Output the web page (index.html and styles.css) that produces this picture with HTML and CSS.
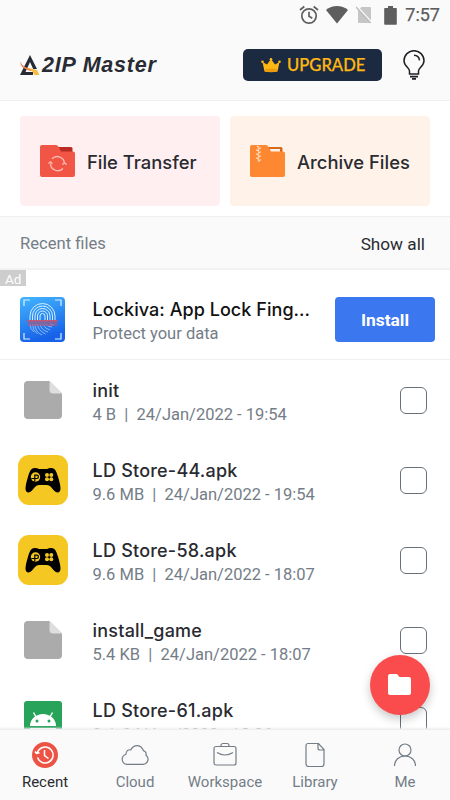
FILE: index.html
```html
<!DOCTYPE html>
<html lang="en">
<head>
<meta charset="utf-8">
<title>AZIP Master</title>
<link rel="stylesheet" href="styles.css">
</head>
<body>
<svg class="defs" width="0" height="0" aria-hidden="true">
  <symbol id="file" viewBox="0 0 38 38">
    <path fill="#ababab" d="M4 0H25.500L38 12.500V34a4 4 0 0 1-4 4H4a4 4 0 0 1-4-4V4a4 4 0 0 1 4-4z"/>
    <path fill="#dedede" d="M25.500 0L38 12.500H29a3.500 3.500 0 0 1-3.500-3.500z"/>
  </symbol>
  <symbol id="store" viewBox="0 0 50 50">
    <rect width="50" height="50" rx="11" fill="#f5c722"/>
    <path d="M15.500 13.200c2-.4 4 0 5.500.9h8c1.500-.9 3.500-1.300 5.500-.9 2.700.5 4 3.400 5.500 8.500 1.500 5 2.600 9 2.500 12 0 4-3.500 5-6.500 1.800-2.500-2.700-4-5.500-7-5.500h-8c-3 0-4.500 2.800-7 5.500-3 3.200-6.500 2.200-6.500-1.800 0-3 1-7 2.500-12 1.500-5.100 2.800-8 5.500-8.500z"/>
    <circle cx="17.500" cy="22" r="4.700" fill="#f5c722"/>
    <path d="M16.800 26.500v-6.300h2a1.600 1.600 0 0 1 0 3.300h-5.500" fill="none" stroke="#000" stroke-width="1.200"/>
    <g fill="#f5c722"><circle cx="29" cy="20" r="2"/><circle cx="33.300" cy="20" r="2"/><circle cx="29" cy="24.300" r="2"/><circle cx="33.300" cy="24.300" r="2"/></g>
  </symbol>
</svg>
<div class="app">
  <header class="top">
    <div class="status">
      <svg width="20" height="20" viewBox="0 0 20 20" fill="none" stroke="#5e5e5e" stroke-width="1.700"><circle cx="10" cy="11" r="7.200"/><path d="M10 6.700V11.300L13.300 13.300M1 5L5.300 1.500M19 5L14.700 1.500"/></svg>
      <svg class="wifi" width="22" height="18" viewBox="0 0 22 18"><path fill="#5e5e5e" d="M0 4C6-1.200 16-1.200 22 4L11 17.500z"/></svg>
      <svg class="sim" width="16" height="18" viewBox="0 0 16 18"><path fill="#c6c6c6" d="M5.500 1H14a1 1 0 0 1 1 1v15H3a1 1 0 0 1-1-1V4.500z"/><path d="M1.200 .5L16 16.500" stroke="#fafafa" stroke-width="1.500"/><path d="M0 1L14.500 17" stroke="#bdbdbd" stroke-width="1.400"/></svg>
      <svg class="battery" width="13" height="19" viewBox="0 0 13 19"><path fill="#5e5e5e" d="M4 0h5v2h3a.8.8 0 0 1 .8.800V18a.8.8 0 0 1-.8.800H1a.8.8 0 0 1-.8-.8V2.800A.8.8 0 0 1 1 2h3z"/></svg>
      <span class="clock">7:57</span>
    </div>
    <div class="brand">
      <div class="logo">
        <svg width="20" height="21" viewBox="0 0 20 21"><path fill="#292b34" d="M10 0L17 14H13.200L10 7 5.500 17H13v3H0z"/><path fill="#ee8352" d="M1 6C0 11 8 14 15 15L11 16C4 14-1 11 1 6z"/><path fill="#f4bd43" d="M7 12.500L17 15 19.500 20H14.500L12 16z"/></svg>
        <span>2IP Master</span>
      </div>
      <div class="upgrade">
        <svg width="20" height="15" viewBox="0 0 20 15"><path fill="#fdb813" d="M1.500 4L6 6.500 10 1l4 5.500L18.500 4 16.500 13.500q-6.500 1.500-13 0z"/><g fill="#fdb813"><circle cx="1.500" cy="3.800" r="1.300"/><circle cx="10" cy="1.300" r="1.300"/><circle cx="18.500" cy="3.800" r="1.300"/></g><path d="M3.700 11.500q6.300-2 12.600 0l-.3 2q-6 1.200-12 0z" fill="#ee9b10"/></svg>
        <span>UPGRADE</span>
      </div>
      <svg class="bulb" width="22" height="30" viewBox="0 0 22 30" fill="none" stroke="#1f2024" stroke-width="1.500"><path d="M6.500 24v-3C6.500 18 1 16 1 10.700a10 10 0 0 1 20 0C21 16 15.500 18 15.500 21v3zM11 5.300q5 .3 5.500 5"/><path d="M7 26.700h8M9 28.900h4" stroke-width="1.700"/></svg>
    </div>
  </header>
  <section class="cards">
    <div class="card transfer">
      <svg width="36" height="32" viewBox="0 0 36 32"><path fill="#b92b23" d="M17 2H31a1.500 1.500 0 0 1 1.500 1.500V10H17z"/><path fill="#f05545" d="M2 0H16q1.500 0 2.300 1.500L21 6.500H33a2 2 0 0 1 2 2V30a2 2 0 0 1-2 2H2a2 2 0 0 1-2-2V2a2 2 0 0 1 2-2z"/><g fill="none" stroke="#fbb8ac" stroke-width="1.500"><path d="M12 13.800a7.300 7.300 0 0 1 12.500 5M23 23.500a7.300 7.300 0 0 1-12.500-5"/><path d="M22.300 19.500l2.200-1.500 2.200 1.500M8.500 18.500l2-1.500 2 1.500"/></g></svg>
      <span>File Transfer</span>
    </div>
    <div class="card archive">
      <svg width="36" height="32" viewBox="0 0 36 32"><path fill="#d66a16" d="M17 2H31a1.500 1.500 0 0 1 1.500 1.500V10H17z"/><path fill="#fff3e9" d="M20 4h10v5H20z"/><path fill="#fe8732" d="M2 0H16q1.500 0 2.300 1.500L21 6.500H33a2 2 0 0 1 2 2V30a2 2 0 0 1-2 2H2a2 2 0 0 1-2-2V2a2 2 0 0 1 2-2z"/><path d="M7 1l3 2-3 2 3 2-3 2 3 2-3 2 3 2-3 2" fill="none" stroke="#ffe0c6" stroke-width="1.500" stroke-dasharray="2.400 1.200"/></svg>
      <span>Archive Files</span>
    </div>
  </section>
  <div class="section-head"><span>Recent files</span><span class="all">Show all</span></div>
  <section class="ad">
    <span class="tag">Ad</span>
    <svg class="ad-icon" width="45" height="45" viewBox="0 0 45 45"><defs><linearGradient id="blue" x2=".3" y2="1"><stop stop-color="#43b6ff"/><stop offset="1" stop-color="#1762e8"/></linearGradient></defs><rect width="45" height="45" rx="4" fill="url(#blue)"/><path d="M4 9V3h6M35 3h6v6M4 36v6h6M35 42h6v-6" fill="none" stroke="#d9f0ff" stroke-width="1.200"/><g fill="none" stroke="#d5f1ff" stroke-width="1"><path d="M10 24v-5a12.500 12.500 0 0 1 25 0v5M12.500 24v-5a10 10 0 0 1 20 0v5M15 24v-5a7.500 7.500 0 0 1 15 0v5M17.500 24v-5a5 5 0 0 1 10 0v5M20 24v-5a2.500 2.500 0 0 1 5 0v5"/><path stroke="#8bb6f7" d="M10 27q0 5 4 8M12.500 27q0 6 5 10M15 27q0 8 7 11M17.500 27q0 6 8 10M20 27q1 6 8 8M23 27q2 5 7 6M26 27q2 3 6 3M30 27q2 1 4 1"/></g><rect x="8" y="24" width="29" height="5" fill="#ab587d" opacity=".65"/><path d="M7 23.700h31" stroke="#ca536d" stroke-width="1.300"/></svg>
    <div class="info"><b>Lockiva: App Lock Fing...</b><small>Protect your data</small></div>
    <div class="install">Install</div>
  </section>
  <main class="files">
    <div class="row"><span class="pic"><svg width="38" height="38"><use href="#file"/></svg></span><div class="info"><b>init</b><small>4 B&nbsp; |&nbsp; 24/Jan/2022 - 19:54</small></div><i class="box"></i></div>
    <div class="row"><span class="pic"><svg width="50" height="50"><use href="#store"/></svg></span><div class="info"><b>LD Store-44.apk</b><small>9.6 MB&nbsp; |&nbsp; 24/Jan/2022 - 19:54</small></div><i class="box"></i></div>
    <div class="row"><span class="pic"><svg width="50" height="50"><use href="#store"/></svg></span><div class="info"><b>LD Store-58.apk</b><small>9.6 MB&nbsp; |&nbsp; 24/Jan/2022 - 18:07</small></div><i class="box"></i></div>
    <div class="row"><span class="pic"><svg width="38" height="38"><use href="#file"/></svg></span><div class="info"><b>install_game</b><small>5.4 KB&nbsp; |&nbsp; 24/Jan/2022 - 18:07</small></div><i class="box"></i></div>
    <div class="row"><span class="pic"><svg width="38" height="38" viewBox="0 0 38 38"><rect width="38" height="38" rx="3" fill="#27a35a"/><path d="M6 25a13 12 0 0 1 26 0z" fill="#fff"/><path d="M12 16L9.500 11.500M26 16l2.500-4.500" stroke="#fff" stroke-width="1.400"/><circle cx="13" cy="20" r="1.500" fill="#27a35a"/><circle cx="25" cy="20" r="1.500" fill="#27a35a"/><path d="M6 27h26v10H6z" fill="#fff"/></svg></span><div class="info"><b>LD Store-61.apk</b><small>0&nbsp; |&nbsp; 24/Jan/2022 - 18:06</small></div><i class="box"></i></div>
    <div class="fab"><svg width="24" height="22" viewBox="0 0 24 22"><path fill="#fff" d="M2 0h7l2.500 3H21a2 2 0 0 1 2 2v14a2 2 0 0 1-2 2H2a2 2 0 0 1-2-2V2a2 2 0 0 1 2-2z"/></svg></div>
  </main>
  <nav class="tabs">
    <div class="tab active"><svg width="28" height="28" viewBox="0 0 28 28"><circle class="disc" cx="14" cy="14" r="13"/><path class="hands" d="M6.500 16.500A8 8 0 1 0 8 8.800L5.500 12.500M4 10.500l1.500 2 3-.8M13.500 9v5.500l4 3"/></svg><span>Recent</span></div>
    <div class="tab"><svg width="28" height="28" viewBox="0 0 28 28"><path d="M5.500 23.300h16.700a5 5 0 0 0 2.800-9q.8-3.500-2.500-4.500-1.500-4.600-6-5.200-4.700-.1-6.600 4.200-4.500-.5-5 4.500-4 1.500-3.700 5.500.5 4 4.300 4.500z"/></svg><span>Cloud</span></div>
    <div class="tab"><svg width="28" height="28" viewBox="0 0 28 28"><rect x="3" y="5.500" width="22" height="18.500" rx="2"/><path d="M10 5.500V4.500a2 2 0 0 1 2-2h4a2 2 0 0 1 2 2v1M6 11.500q8 5 16 0"/></svg><span>Workspace</span></div>
    <div class="tab"><svg width="28" height="28" viewBox="0 0 28 28"><path d="M7 2.500h10.500l5.500 6V23a2.500 2.500 0 0 1-2.500 2.500H7.500A2.500 2.500 0 0 1 5 23V4.500a2 2 0 0 1 2-2zM17 2.500V7a2 2 0 0 0 2 2h4"/></svg><span>Library</span></div>
    <div class="tab"><svg width="28" height="28" viewBox="0 0 28 28"><circle cx="14" cy="9" r="6"/><path d="M3.500 25c0-6 4.500-10 10.500-10s10.500 4 10.500 10"/></svg><span>Me</span></div>
  </nav>
</div>
</body>
</html>
```
FILE: styles.css
```css
* { box-sizing: border-box; }
body { margin: 0; font-family: Roboto, sans-serif; background: #fff; color: #292b31; }
svg { display: block; flex: none; }
.defs { position: absolute; }
.app { width: 450px; height: 800px; display: flex; flex-direction: column; overflow: hidden; }
.top { height: 101px; flex: none; background: #fafafa; border-bottom: 1px solid #eee; }
.status { height: 30px; padding: 0 10px 0 0; display: flex; align-items: center; justify-content: flex-end; color: #5e5e5e; }
.wifi { margin-left: 7px; }
.sim { margin-left: 8px; }
.battery { margin-left: 12px; }
.clock { margin-left: 8px; font-size: 18px; font-weight: 400; line-height: 28px; -webkit-text-stroke: .25px #5e5e5e; }
.brand { height: 70px; display: flex; align-items: center; padding: 0 25px 0 20px; }
.logo { display: flex; align-items: center; width: 223px; gap: 2px; color: #292b34; }
.logo span { font: italic 700 21.5px/24px "Liberation Sans", sans-serif; letter-spacing: .8px; white-space: nowrap; }
.upgrade { width: 139px; height: 32px; border-radius: 5px; background: #1b2a41; display: flex; align-items: center; gap: 6px; padding-left: 18px; color: #fdb813; font: 500 16.6px Lato, sans-serif; -webkit-text-stroke: .25px #fdb813; }
.bulb { margin-left: 21px; }
.cards { height: 115px; flex: none; padding: 15px 20px 10px; display: flex; gap: 10px; }
.card { width: 200px; height: 90px; border-radius: 4px; display: flex; align-items: center; padding-left: 20px; gap: 11px; font: 500 18.4px Inter, sans-serif; white-space: nowrap; }
.card span { padding-top: 2px; }
.transfer { background: #ffeff0; }
.archive { background: #fff3e9; }
.section-head { height: 54px; flex: none; display: flex; justify-content: space-between; align-items: center; padding: 2px 25px 0 20px; background: #fafafa; border-top: 1px solid #f0f0f0; border-bottom: 2px solid #f0f2f3; font-size: 16.6px; color: #747d87; }
.all { color: #292b31; font-size: 17.2px; }
.ad { height: 90px; flex: none; position: relative; display: flex; align-items: center; padding: 9px 15px 0 20px; border-bottom: 1px solid #f0f0f0; }
.ad .info { margin-left: 27.5px; width: 242.5px; }
.ad b { color: #111; }
.ad .info b { letter-spacing: .05px; }
.tag { position: absolute; left: 0; top: 0; width: 26px; height: 16px; background: #cdcdcd; color: #fff; font-size: 13.5px; line-height: 18px; padding-left: 5px; }
.install { width: 100px; height: 45px; border-radius: 4px; background: #3b77ef; color: #fff; font: 700 17.4px/46px Roboto, sans-serif; text-align: center; }
.files { flex: 1; min-height: 0; overflow: hidden; position: relative; }
.row { height: 80px; display: flex; align-items: center; padding-right: 23px; }
.pic { width: 85px; display: flex; justify-content: center; }
.row .info { margin-left: 7.5px; flex: 1; }
.info { padding-top: 5px; }
.info b { display: block; font: 500 18px/24px Inter, sans-serif; letter-spacing: .22px; white-space: nowrap; }
.info small { display: block; font-size: 16.5px; line-height: 24px; color: #747d87; white-space: nowrap; }
.box { width: 27px; height: 27px; border: 1.5px solid #66717c; border-radius: 6px; }
.fab { position: absolute; left: 370px; top: 295px; width: 60px; height: 60px; border-radius: 50%; background: #fa4c4d; box-shadow: 0 4px 10px rgba(0,0,0,.22); display: flex; align-items: center; justify-content: center; }
.tabs { height: 71px; flex: none; background: #fafafa; display: flex; border-top: 1px solid #eee; box-shadow: 0 -1px 2px #eee; position: relative; }
.tab { width: 90px; padding-top: 11px; display: flex; flex-direction: column; align-items: center; color: #747d87; font-size: 15px; line-height: 26px; }
.tab svg { fill: none; stroke: #747d87; stroke-width: 1.2; }
.tab .disc { fill: #ec5344; stroke: none; }
.tab .hands { stroke: #fff; stroke-width: 1.5; }
.active { color: #292b31; }
```
